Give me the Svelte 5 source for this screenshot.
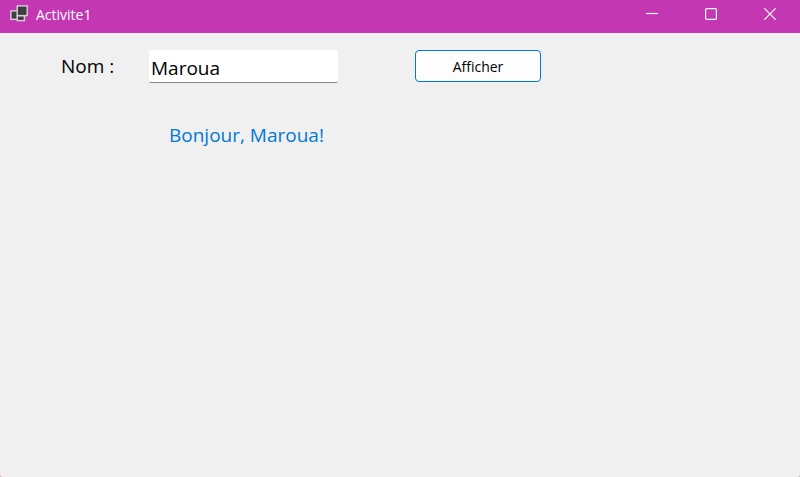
<script>
  let name = $state('Maroua');
  let greeting = $state('Bonjour, Maroua!');

  function show(event) {
    event.preventDefault();
    greeting = `Bonjour, ${name}!`;
  }
</script>

<div class="window">
  <header class="titlebar">
    <svg class="app-icon" width="18" height="18" viewBox="0 0 18 18" aria-hidden="true">
      <g fill="#3f3f41" stroke="#d9cfd9" stroke-width="1.4">
        <rect x="0.9" y="5.9" width="7" height="8.4" />
        <rect x="7.2" y="10.6" width="7.2" height="5" />
        <rect x="7.2" y="0.9" width="10" height="9.7" />
      </g>
    </svg>
    <h1>Activite1</h1>
    <div class="controls">
      <button type="button" aria-label="Réduire">
        <svg width="12" height="12" viewBox="0 0 12 12"><path d="M0 5.5H12" /></svg>
      </button>
      <button type="button" aria-label="Agrandir">
        <svg width="12" height="12" viewBox="0 0 12 12"><rect x="0.6" y="0.6" width="10.8" height="10.8" rx="1.2" /></svg>
      </button>
      <button type="button" aria-label="Fermer">
        <svg width="12" height="12" viewBox="0 0 12 12"><path d="M0.3 0.3L11.7 11.7M11.7 0.3L0.3 11.7" /></svg>
      </button>
    </div>
  </header>

  <main>
    <form onsubmit={show}>
      <label for="name">Nom :</label>
      <input id="name" type="text" autocomplete="off" bind:value={name} />
      <button class="show" type="submit">Afficher</button>
    </form>
    <output for="name">{greeting}</output>
  </main>
</div>

<style>
  :global(body) {
    background: #dca0d4;
  }

  .window {
    display: flex;
    flex-direction: column;
    min-height: 100vh;
    border-radius: 0 0 3px 3px;
    background: #f0f0f0;
    color: #000;
    font-family: 'Segoe UI', 'Open Sans', 'Noto Sans', sans-serif;
    font-variant-ligatures: none;
  }

  .titlebar {
    display: flex;
    align-items: flex-start;
    height: 33px;
    padding: 0 1px 0 10px;
    background: #c337b2;
    color: #fff;
  }

  .app-icon {
    margin-top: 5px;
  }

  h1 {
    margin: 0 0 0 8px;
    font-size: 14px;
    font-weight: 400;
    line-height: 29px;
  }

  .controls {
    display: flex;
    margin-left: auto;
  }

  .controls button {
    display: flex;
    align-items: center;
    justify-content: center;
    width: 59px;
    height: 28px;
    padding: 0;
    border: 0;
    background: none;
  }

  .controls svg {
    fill: none;
    stroke: #fff;
    stroke-width: 1.2;
  }

  main {
    padding: 17px 20px 20px 61px;
  }

  form {
    display: flex;
    align-items: flex-start;
  }

  label {
    width: 88px;
    font-size: 19px;
    line-height: 32px;
  }

  input {
    box-sizing: border-box;
    width: 189px;
    height: 33px;
    margin-right: 77px;
    padding: 3px 2px 0;
    border: 0;
    border-bottom: 1px solid #868686;
    border-radius: 2px;
    outline: 0;
    background: #fff;
    color: #000;
    font-family: inherit;
    font-size: 19px;
  }

  .show {
    width: 126px;
    height: 32px;
    padding: 0;
    border: 1px solid #0078d4;
    border-radius: 4px;
    background: #fdfdfd;
    color: #000;
    font-family: inherit;
    font-size: 14px;
    font-variant-ligatures: none;
  }

  output {
    display: block;
    margin: 36px 0 0 108px;
    color: #0078d7;
    font-size: 19px;
    line-height: 32px;
  }
</style>
